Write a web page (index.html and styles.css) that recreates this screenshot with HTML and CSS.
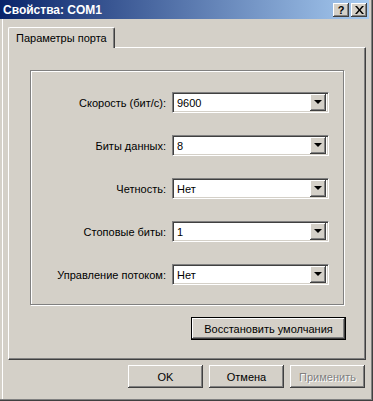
FILE: index.html
```html
<!DOCTYPE html>
<html lang="ru">
<head>
    <meta charset="UTF-8">
    <title>Свойства: COM1</title>
    <link rel="stylesheet" href="styles.css">
</head>
<body>
<div class="window">
    <div class="titlebar">
        <span class="title">Свойства: COM1</span>
        <div class="caption-btns">
            <span class="cap-btn">?</span>
            <span class="cap-btn">
                <svg width="9" height="8" viewBox="0 0 9 8"><path d="M0 0h2l2.5 3 2.5-3h2L5.5 4 9 8H7L4.5 5 2 8H0l3.5-4z" fill="#000"/></svg>
            </span>
        </div>
    </div>
    <div class="body">
        <div class="tabs">
            <div class="tab">Параметры порта</div>
        </div>
        <div class="panel">
            <div class="group">
                <label>Скорость (бит/с):</label>
                <div class="combo"><span>9600</span><i class="drop"></i></div>
                <label>Биты данных:</label>
                <div class="combo"><span>8</span><i class="drop"></i></div>
                <label>Четность:</label>
                <div class="combo"><span>Нет</span><i class="drop"></i></div>
                <label>Стоповые биты:</label>
                <div class="combo"><span>1</span><i class="drop"></i></div>
                <label>Управление потоком:</label>
                <div class="combo"><span>Нет</span><i class="drop"></i></div>
            </div>
            <div class="restore-row">
                <button class="btn default">Восстановить умолчания</button>
            </div>
        </div>
        <div class="actions">
            <button class="btn">OK</button>
            <button class="btn">Отмена</button>
            <button class="btn disabled">Применить</button>
        </div>
    </div>
</div>
</body>
</html>
```

FILE: styles.css
```css
html,body{
    margin:0;
    padding:0;
    background:#d4d0c8;
}
.window{
    width:373px;
    height:401px;
    box-sizing:border-box;
    background:#d4d0c8;
    border-right:1px solid #404040;
    border-bottom:1px solid #404040;
    box-shadow:inset -1px -1px 0 #808080,inset 2px 0 0 #d4d0c8,inset 3px 0 0 #fff;
    font-family:Tahoma,"Liberation Sans",Arial,sans-serif;
    font-size:11px;
    color:#000;
    display:flex;
    flex-direction:column;
}
.titlebar{
    height:19px;
    margin-right:3px;
    background:linear-gradient(to right,#0a246a,#a6caf0);
    display:flex;
    align-items:center;
    justify-content:space-between;
    padding-left:3px;
}
.title{
    color:#fff;
    font-weight:bold;
    font-size:12px;
}
.caption-btns{
    display:flex;
    gap:2px;
    padding-right:2px;
}
.cap-btn{
    width:16px;
    height:14px;
    box-sizing:border-box;
    background:#d4d0c8;
    box-shadow:inset -1px -1px 0 #404040,inset 1px 1px 0 #fff,inset -2px -2px 0 #808080;
    display:flex;
    align-items:center;
    justify-content:center;
    font-weight:bold;
    font-size:11px;
    line-height:14px;
}
.body{
    flex:1;
    display:flex;
    flex-direction:column;
    padding:8px 6px 0 8px;
}
.tabs{
    display:flex;
    height:20px;
}
.tab{
    height:21px;
    box-sizing:border-box;
    padding:4px 7px 0 7px;
    border-top:1px solid #fff;
    border-left:1px solid #fff;
    border-right:1px solid #404040;
    box-shadow:inset -1px 0 0 #808080;
    border-radius:2px 2px 0 0;
    background:#d4d0c8;
    position:relative;
    z-index:1;
}
.panel{
    height:313px;
    box-sizing:border-box;
    border-top:1px solid #fff;
    border-left:1px solid #fff;
    border-right:1px solid #404040;
    border-bottom:1px solid #404040;
    box-shadow:inset -1px -1px 0 #808080;
    padding:22px 19px 0 21px;
    display:flex;
    flex-direction:column;
}
.group{
    height:235px;
    box-sizing:border-box;
    margin-right:2px;
    border:1px solid #808080;
    box-shadow:inset 1px 1px 0 #fff,1px 1px 0 #fff;
    display:grid;
    grid-template-columns:1fr 157px;
    grid-auto-rows:21px;
    row-gap:22px;
    column-gap:6px;
    padding:21px 14px 0 0;
    align-items:center;
}
.group label{
    text-align:right;
}
.combo{
    height:21px;
    box-sizing:border-box;
    background:#fff;
    border-top:1px solid #808080;
    border-left:1px solid #808080;
    border-right:1px solid #fff;
    border-bottom:1px solid #fff;
    box-shadow:inset 1px 1px 0 #404040,inset -1px -1px 0 #d4d0c8;
    display:flex;
    align-items:center;
    justify-content:space-between;
    padding:0 2px 0 4px;
}
.drop{
    width:16px;
    height:17px;
    box-sizing:border-box;
    background:#d4d0c8;
    box-shadow:inset -1px -1px 0 #404040,inset 1px 1px 0 #fff,inset -2px -2px 0 #808080;
    display:flex;
    align-items:center;
    justify-content:center;
}
.drop::after{
    content:"";
    border-left:4px solid transparent;
    border-right:4px solid transparent;
    border-top:4px solid #000;
    margin:0 1px 1px 0;
}
.restore-row{
    display:flex;
    justify-content:flex-end;
    margin-top:12px;
}
.btn{
    font:inherit;
    color:#000;
    height:23px;
    width:75px;
    padding:0;
    background:#d4d0c8;
    border:none;
    box-shadow:inset -1px -1px 0 #404040,inset 1px 1px 0 #fff,inset -2px -2px 0 #808080;
}
.btn.default{
    width:155px;
    border:1px solid #000;
    box-shadow:inset -1px -1px 0 #404040,inset 1px 1px 0 #fff,inset -2px -2px 0 #808080;
}
.btn.disabled{
    color:#808080;
    text-shadow:1px 1px 0 #fff;
}
.actions{
    display:flex;
    justify-content:flex-end;
    gap:6px;
    margin-top:5px;
    padding-right:1px;
}
```
